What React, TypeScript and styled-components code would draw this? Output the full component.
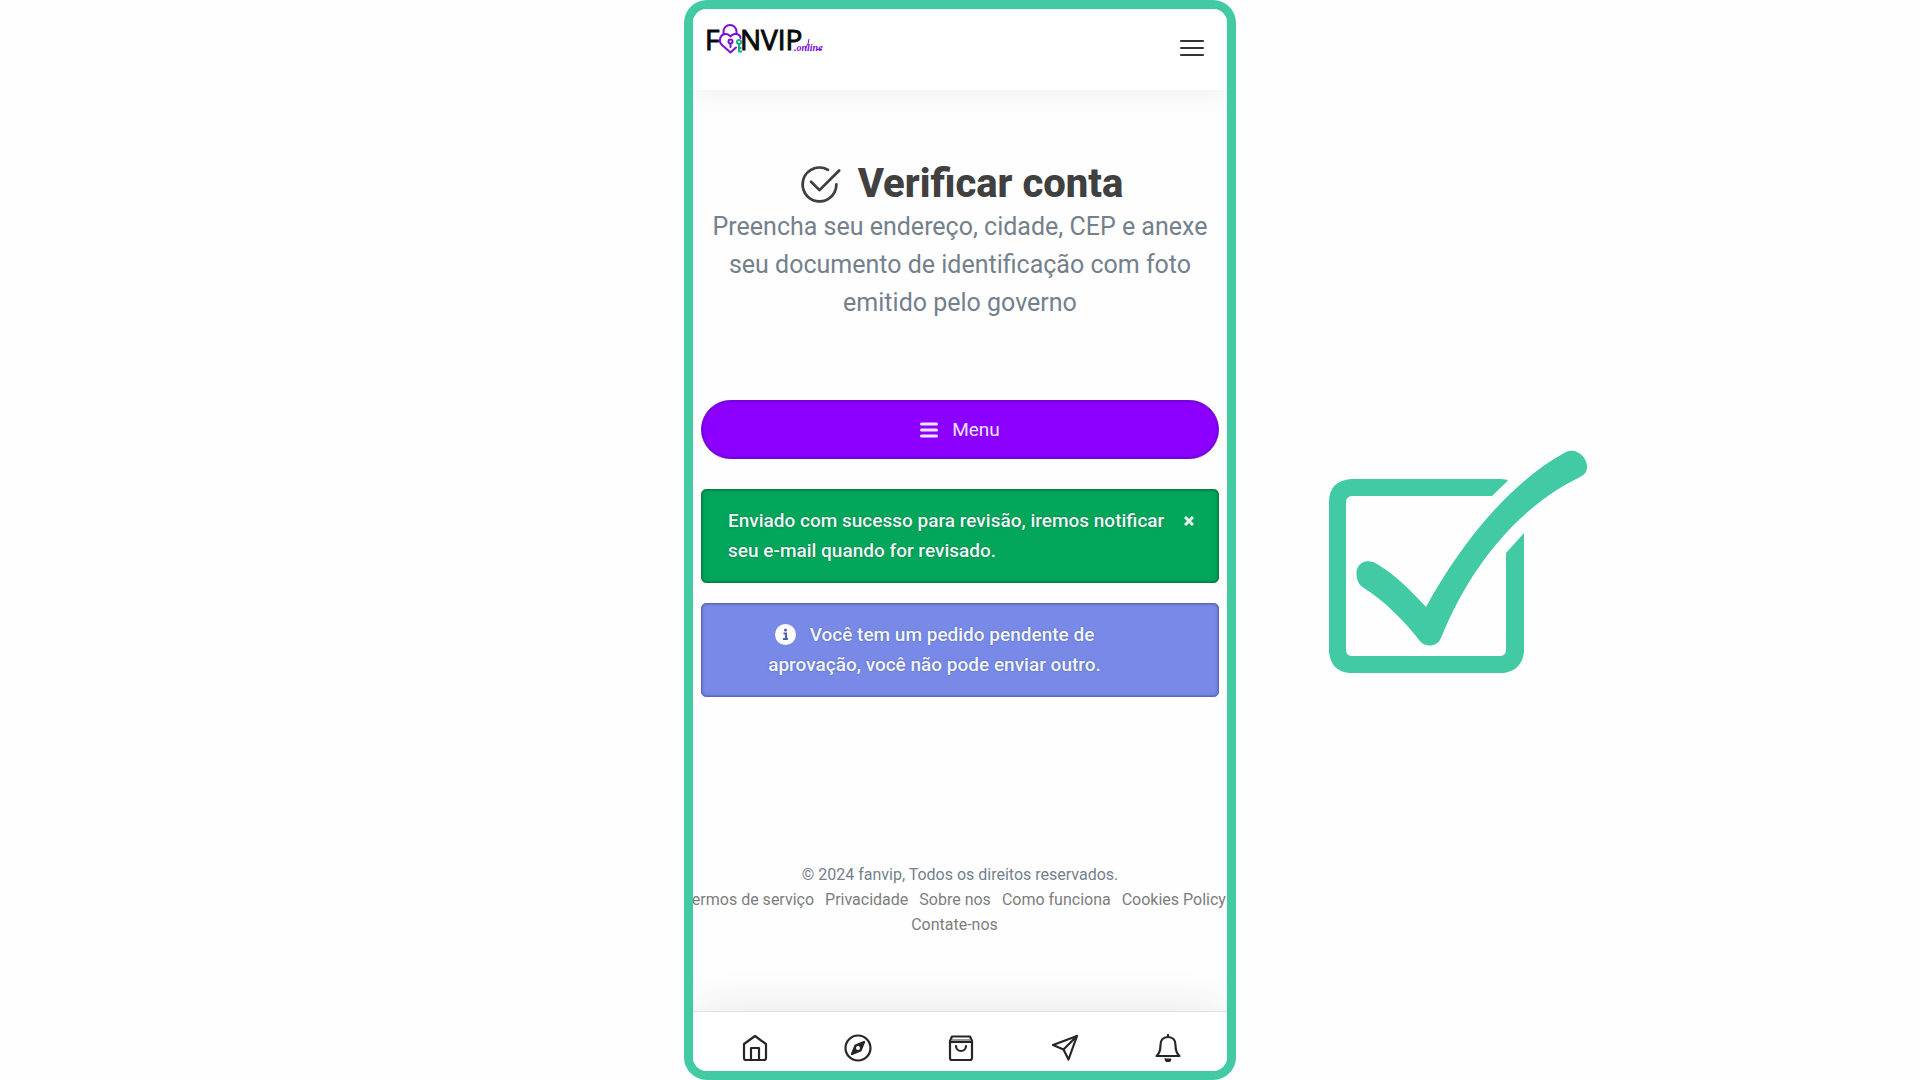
import React from "react";
import styled, { createGlobalStyle } from "styled-components";
import { BsCheck2Circle } from "react-icons/bs";

const teal = "#42caa4";

const GlobalStyle = createGlobalStyle`
  *, *::before, *::after { box-sizing: border-box; }
  body {
    margin: 0;
    background: #fefefe;
    color: #404040;
    font-family: Roboto, "Liberation Sans", sans-serif;
  }
`;

const Page = styled.div`
  display: grid;
  grid-template-columns: 1fr minmax(0, 552px) 1fr;
  min-height: 100vh;
`;

const Phone = styled.div`
  grid-column: 2;
  display: flex;
  flex-direction: column;
  overflow: hidden;
  border: 9px solid ${teal};
  border-radius: 23px;
  background: #fefefe;
`;

const Header = styled.header`
  display: flex;
  justify-content: space-between;
  align-items: flex-start;
  height: 81px;
  padding: 10px 23px 0 10px;
  background: #fff;
  box-shadow: 0 4px 26px rgba(60, 60, 130, 0.08);
`;

const LogoLink = styled.a`
  display: block;
  line-height: 0;
`;

const IconButton = styled.button`
  display: flex;
  padding: 0;
  margin-top: 20px;
  border: 0;
  background: none;
  color: #333;
  cursor: pointer;
`;

const Main = styled.main`
  display: flex;
  flex-direction: column;
  padding: 70px 8px 0;
`;

const Title = styled.h1`
  display: flex;
  justify-content: center;
  align-items: center;
  gap: 16px;
  margin: 0;
  color: #404040;
  font-size: 40px;
  font-weight: 800;
  line-height: 48px;
`;

const Subtitle = styled.p`
  margin: 0 0 78px;
  color: #74808c;
  font-size: 25px;
  line-height: 38px;
  text-align: center;
`;

const MenuButton = styled.button`
  display: flex;
  justify-content: center;
  align-items: center;
  gap: 14px;
  height: 59px;
  margin-bottom: 30px;
  border: 1px solid #7404d4;
  border-radius: 30px;
  background: #8c00ff;
  box-shadow: inset 0 0 3px #5c00a8;
  color: #efe4fb;
  font: inherit;
  font-size: 19px;
  cursor: pointer;
`;

const Alert = styled.div<{ $tone: "success" | "info" }>`
  display: flex;
  justify-content: space-between;
  margin-bottom: 20px;
  padding: 16px 26px;
  padding-right: ${(p) => (p.$tone === "info" ? "77px" : "24px")};
  border: 1px solid ${(p) => (p.$tone === "info" ? "#5a68bd" : "#0a8145")};
  border-radius: 5px;
  background: ${(p) => (p.$tone === "info" ? "#7889e8" : "#03a65a")};
  box-shadow: inset 0 0 3px ${(p) => (p.$tone === "info" ? "#4a57a8" : "#04602f")};
  color: #f0f6f6;
  font-size: 19px;
  font-weight: 500;
  line-height: 30px;
  text-shadow: 0 0 2px rgba(0, 0, 40, 0.3);
`;

const AlertText = styled.p<{ $centered?: boolean }>`
  flex: 1;
  margin: 0;
  text-align: ${(p) => (p.$centered ? "center" : "left")};
  white-space: nowrap;

  svg {
    margin-right: 14px;
    vertical-align: -4px;
  }
`;

const CloseButton = styled.button`
  display: flex;
  align-items: center;
  height: 30px;
  padding: 0;
  border: 0;
  background: none;
  color: #e4f7ec;
  cursor: pointer;
`;

const Footer = styled.footer`
  margin-top: auto;
  padding-bottom: 74px;
  color: #74808c;
  font-size: 16px;
  line-height: 25px;
  text-align: center;
`;

const FooterText = styled.p`
  margin: 0;
`;

const FooterLinks = styled.ul`
  display: flex;
  flex-wrap: wrap;
  justify-content: center;
  margin: 0 -16px;
  padding: 0;
  list-style: none;
`;

const FooterItem = styled.li`
  margin-right: 11px;
`;

const FooterLink = styled.a`
  color: #7d7d7d;
  text-decoration: none;
  white-space: nowrap;
`;

const BottomNav = styled.nav`
  display: grid;
  grid-template-columns: repeat(5, 1fr);
  height: 60px;
  padding: 0 7px 0 10px;
  border-top: 1px solid #dcdfe4;
  background: #fff;
  box-shadow: 0 -6px 44px rgba(0, 0, 0, 0.08);
`;

const NavLink = styled.a`
  display: flex;
  justify-content: center;
  align-items: center;
  padding-top: 13px;
  color: #262626;
`;

const Aside = styled.aside`
  display: flex;
  align-items: center;
  padding: 44px 0 0 93px;
`;

const Logo = () => (
  <svg width="122" height="44" viewBox="-4 -4 122 44" role="img" aria-label="FANVIP.online">
    <g fill="#0a0a0a" fontFamily="'Open Sans', 'Noto Sans', sans-serif" fontSize="28" stroke="#0a0a0a" strokeWidth="1">
      <text x="-2" y="27">F</text>
      <text x="33" y="27">NVIP</text>
    </g>
    <g fill="none" stroke="#7a0fd6" strokeWidth="2" strokeLinejoin="round" strokeLinecap="round">
      <path d="M16.500 11V8.500a6.500 6.500 0 0 1 13 0V11" />
      <path d="M29 24.500L23.500 29.500L15 22C10.500 17.500 14 10 19.500 11C21.500 11.300 22.500 12 23.500 13.500C24.500 12 25.500 11.300 27.500 11C31 10.500 33.500 12.500 33.500 15" />
      <circle cx="23.500" cy="18.500" r="2" />
      <path d="M23.500 21v3" />
    </g>
    <g fill="none" stroke="#17b08c" strokeWidth="2">
      <circle cx="32" cy="19" r="2" />
      <path d="M32 21v8.500M32 25h2.500M32 28.500h3" />
    </g>
    <text x="87" y="28" fill="#7a0fd6" fontFamily="'Liberation Serif', serif" fontStyle="italic" fontWeight="700" fontSize="10">
      .online
    </text>
    <path d="M98 26Q102 21 102 16M110 26.500h5" fill="none" stroke="#7a0fd6" strokeWidth="1" />
  </svg>
);

const Bars = ({ width, height, stroke, gap }: { width: number; height: number; stroke: number; gap: number }) => (
  <svg width={width} height={height} fill="none" stroke="currentColor" strokeWidth={stroke} strokeLinecap="round" aria-hidden="true">
    {[-1, 0, 1].map((n) => (
      <path key={n} d={`M${stroke / 2} ${height / 2 + n * gap}H${width - stroke / 2}`} />
    ))}
  </svg>
);

const InfoIcon = () => (
  <svg width="21" height="21" viewBox="0 0 21 21" aria-hidden="true">
    <circle cx="10.500" cy="10.500" r="10.500" fill="#fff" />
    <circle cx="10.500" cy="6" r="1.600" fill="#5360ad" />
    <path d="M8.500 9.500h2.500v5M8 15h5" stroke="#5360ad" strokeWidth="2" fill="none" />
  </svg>
);

const NavIcon = ({ children }: { children: React.ReactNode }) => (
  <svg
    width="28"
    height="28"
    viewBox="0 0 28 28"
    fill="none"
    stroke="currentColor"
    strokeWidth="2.2"
    strokeLinecap="round"
    strokeLinejoin="round"
    aria-hidden="true"
  >
    {children}
  </svg>
);

const navItems = [
  {
    label: "Início",
    icon: (
      <>
        <path d="M3 10L14 2L25 10V24a2 2 0 0 1-2 2H5a2 2 0 0 1-2-2Z" />
        <path d="M10 26V14h8v12" />
      </>
    ),
  },
  {
    label: "Explorar",
    icon: (
      <>
        <circle cx="14" cy="14" r="12.500" />
        <path d="M20 8L16.500 16.500L8 20L11.500 11.500Z" fill="currentColor" />
        <circle cx="14" cy="14" r="2" fill="#fff" stroke="none" />
      </>
    ),
  },
  {
    label: "Loja",
    icon: (
      <>
        <path d="M3 7L5 2.500H23L25 7V24a2 2 0 0 1-2 2H5a2 2 0 0 1-2-2Z" />
        <path d="M5 5H23L24 7H4Z" fill="#999" stroke="none" />
        <path d="M3 8H25M9 12a5 5 0 0 0 10 0" />
      </>
    ),
  },
  {
    label: "Mensagens",
    icon: (
      <>
        <path d="M26 2L2 11L12.500 15.500L17.500 25.500Z" />
        <path d="M26 2L12.500 15.500" />
      </>
    ),
  },
  {
    label: "Notificações",
    icon: (
      <>
        <path d="M14 3C9 3 6.500 6.500 6.500 11C6.500 17 5 20 2.500 22H25.500C23 20 21.500 17 21.500 11C21.500 6.500 19 3 14 3Z" />
        <path d="M14 1V3" />
        <path d="M11 25h6a3 3 0 0 1-6 0Z" fill="currentColor" strokeWidth="1" />
      </>
    ),
  },
];

const footerLinks = ["Termos de serviço", "Privacidade", "Sobre nos", "Como funciona", "Cookies Policy", "Contate-nos"];

const CheckMark = () => (
  <svg width="260" height="224" viewBox="0 0 260 224" role="img" aria-label="Verificado">
    <path
      fill={teal}
      d="M179 30.500Q177 29 172 29H22Q0 31 0 52V202Q2 221 20 223H175Q193 220 195 202V83L177 103V200Q177 205 172 206H22Q17 205 17 200V51Q18 47 22 46H163Z"
    />
    <path
      fill={teal}
      d="M97 157C127 102 176 35 237 2C249 -4 262 11 257 22Q255 25 251 27C190 57 142 114 112 188C108 198 95 197 91 191C77 173 58 153 35 138C27 134 26 122 29 117C33 110 42 110 48 114C67 125 83 142 97 157Z"
    />
  </svg>
);

export default function App() {
  return (
    <>
      <GlobalStyle />
      <Page>
        <Phone>
          <Header>
            <LogoLink href="#">
              <Logo />
            </LogoLink>
            <IconButton type="button" aria-label="Abrir menu">
              <Bars width={24} height={18} stroke={2} gap={7} />
            </IconButton>
          </Header>
          <Main>
            <Title>
              <BsCheck2Circle size={45} aria-hidden="true" />
              Verificar conta
            </Title>
            <Subtitle>
              Preencha seu endereço, cidade, CEP e anexe
              <br />
              seu documento de identificação com foto
              <br />
              emitido pelo governo
            </Subtitle>
            <MenuButton type="button">
              <Bars width={18} height={18} stroke={3} gap={6} />
              Menu
            </MenuButton>
            <Alert $tone="success" role="status">
              <AlertText>
                Enviado com sucesso para revisão, iremos notificar
                <br />
                seu e-mail quando for revisado.
              </AlertText>
              <CloseButton type="button" aria-label="Fechar">
                <svg width="10" height="10" viewBox="0 0 10 10" stroke="currentColor" strokeWidth="3" aria-hidden="true">
                  <path d="M1 1L9 9M9 1L1 9" />
                </svg>
              </CloseButton>
            </Alert>
            <Alert $tone="info" role="status">
              <AlertText $centered>
                <InfoIcon />
                Você tem um pedido pendente de
                <br />
                aprovação, você não pode enviar outro.
              </AlertText>
            </Alert>
          </Main>
          <Footer>
            <FooterText>© 2024 fanvip, Todos os direitos reservados.</FooterText>
            <FooterLinks>
              {footerLinks.map((label) => (
                <FooterItem key={label}>
                  <FooterLink href="#">{label}</FooterLink>
                </FooterItem>
              ))}
            </FooterLinks>
          </Footer>
          <BottomNav>
            {navItems.map((item) => (
              <NavLink key={item.label} href="#" aria-label={item.label}>
                <NavIcon>{item.icon}</NavIcon>
              </NavLink>
            ))}
          </BottomNav>
        </Phone>
        <Aside>
          <CheckMark />
        </Aside>
      </Page>
    </>
  );
}
